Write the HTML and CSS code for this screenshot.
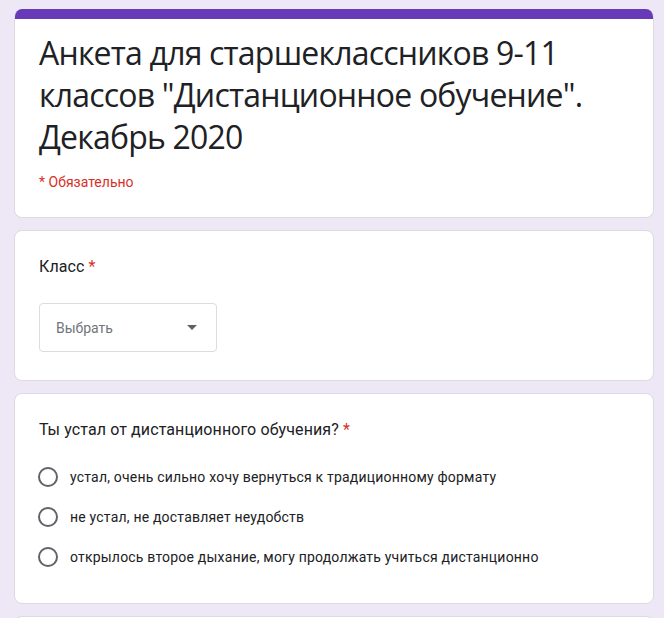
FILE: index.html
```html
<!DOCTYPE html>
<html lang="ru">
<head>
<meta charset="utf-8">
<link rel="stylesheet" href="styles.css">
</head>
<body>
<div class="form">
  <div class="card header-card">
    <div class="bar"></div>
    <div class="header-body">
      <h1 class="title">Анкета для старшеклассников 9-11 классов "Дистанционное обучение". Декабрь 2020</h1>
      <div class="required-note">* Обязательно</div>
    </div>
  </div>

  <div class="card question">
    <div class="q-title">Класс <span class="star">*</span></div>
    <div class="select">
      <span class="select-text">Выбрать</span>
      <span class="arrow"></span>
    </div>
  </div>

  <div class="card question q-radio">
    <div class="q-title">Ты устал от дистанционного обучения? <span class="star">*</span></div>
    <div class="options">
      <label class="option"><span class="radio"></span><span class="opt-text">устал, очень сильно хочу вернуться к традиционному формату</span></label>
      <label class="option"><span class="radio"></span><span class="opt-text">не устал, не доставляет неудобств</span></label>
      <label class="option"><span class="radio"></span><span class="opt-text">открылось второе дыхание, могу продолжать учиться дистанционно</span></label>
    </div>
  </div>

  <div class="card question">
    <div class="q-title">&nbsp;</div>
  </div>
</div>
</body>
</html>
```

FILE: styles.css
```css
html, body {
  margin: 0;
  padding: 0;
}
body {
  background: #ede7f6;
  font-family: Roboto, "Liberation Sans", Arial, sans-serif;
  color: #202124;
  overflow: hidden;
}
.form {
  display: flex;
  flex-direction: column;
  gap: 12px;
  padding: 9px 10px 0 14px;
}
.card {
  background: #fff;
  border: 1px solid #dadce0;
  border-radius: 8px;
  box-sizing: border-box;
}
.header-card {
  border-top: none;
  overflow: hidden;
}
.bar {
  height: 10px;
  background: #673ab7;
}
.header-body {
  padding: 13px 24px 25px 24px;
}
.title {
  margin: 0;
  font-family: "Open Sans", sans-serif;
  font-weight: 400;
  font-size: 32px;
  line-height: 42px;
  letter-spacing: -0.8px;
  color: #202124;
}
.required-note {
  margin-top: 14px;
  font-size: 14px;
  line-height: 20px;
  color: #d93025;
}
.question {
  padding: 24px 24px 28px 24px;
}
.q-radio {
  padding-bottom: 34px;
}
.q-title {
  font-size: 16px;
  line-height: 24px;
  letter-spacing: 0.1px;
  color: #202124;
}
.star {
  color: #d93025;
}
.select {
  margin-top: 24px;
  width: 178px;
  height: 49px;
  box-sizing: border-box;
  border: 1px solid #dadce0;
  border-radius: 4px;
  display: flex;
  align-items: center;
  justify-content: space-between;
  padding: 0 19px 0 16px;
}
.select-text {
  font-size: 14px;
  color: #70757a;
}
.arrow {
  width: 0;
  height: 0;
  border-left: 5px solid transparent;
  border-right: 5px solid transparent;
  border-top: 5px solid #5f6368;
}
.options {
  margin-top: 23px;
  display: flex;
  flex-direction: column;
  gap: 16px;
}
.option {
  display: flex;
  align-items: center;
  gap: 12px;
  height: 24px;
}
.radio {
  width: 20px;
  height: 20px;
  box-sizing: border-box;
  border: 2px solid #5f6368;
  border-radius: 50%;
  flex: none;
  margin-left: -1px;
}
.opt-text {
  font-size: 14px;
  line-height: 20px;
  letter-spacing: 0.2px;
  color: #202124;
}
```
